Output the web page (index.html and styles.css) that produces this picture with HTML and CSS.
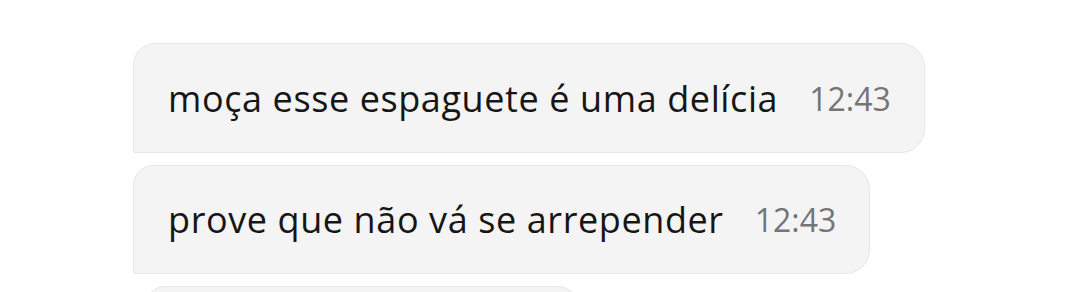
FILE: index.html
```html
<!DOCTYPE html>
<html lang="pt">
<head>
<meta charset="utf-8">
<link rel="stylesheet" href="styles.css">
</head>
<body>
<div class="chat">
  <div class="bubble first">
    <span class="text">moça esse espaguete é uma delícia</span>
    <span class="time">12:43</span>
  </div>
  <div class="bubble middle">
    <span class="text">prove que não vá se arrepender</span>
    <span class="time">12:43</span>
  </div>
  <div class="bubble last">
    <span class="text">&nbsp;</span>
  </div>
</div>
</body>
</html>
```

FILE: styles.css
```css
html, body {
  margin: 0;
  padding: 0;
  background: #ffffff;
}
body {
  width: 1080px;
  height: 292px;
  overflow: hidden;
  font-family: "Open Sans", "Noto Sans", sans-serif;
}
.chat {
  display: flex;
  flex-direction: column;
  align-items: flex-start;
  gap: 12px;
  height: 292px;
  box-sizing: border-box;
  overflow: hidden;
  padding: 43px 0 0 133px;
}
.bubble {
  display: flex;
  flex: none;
  align-items: center;
  gap: 31px;
  height: 110px;
  box-sizing: border-box;
  padding: 0 33px 0 34px;
  background: #f4f4f4;
  border: 1px solid #e7e7e7;
  border-radius: 22px 24px 24px 2px;
}
.bubble.middle {
  height: 109px;
  border-radius: 20px 24px 24px 2px;
}
.bubble.last {
  margin-left: 12px;
  width: 436px;
  border-radius: 20px 24px 24px 20px;
}
.text {
  font-size: 36px;
  color: #161616;
  letter-spacing: 0.6px;
}
.time {
  font-size: 32px;
  color: #757575;
}
```
